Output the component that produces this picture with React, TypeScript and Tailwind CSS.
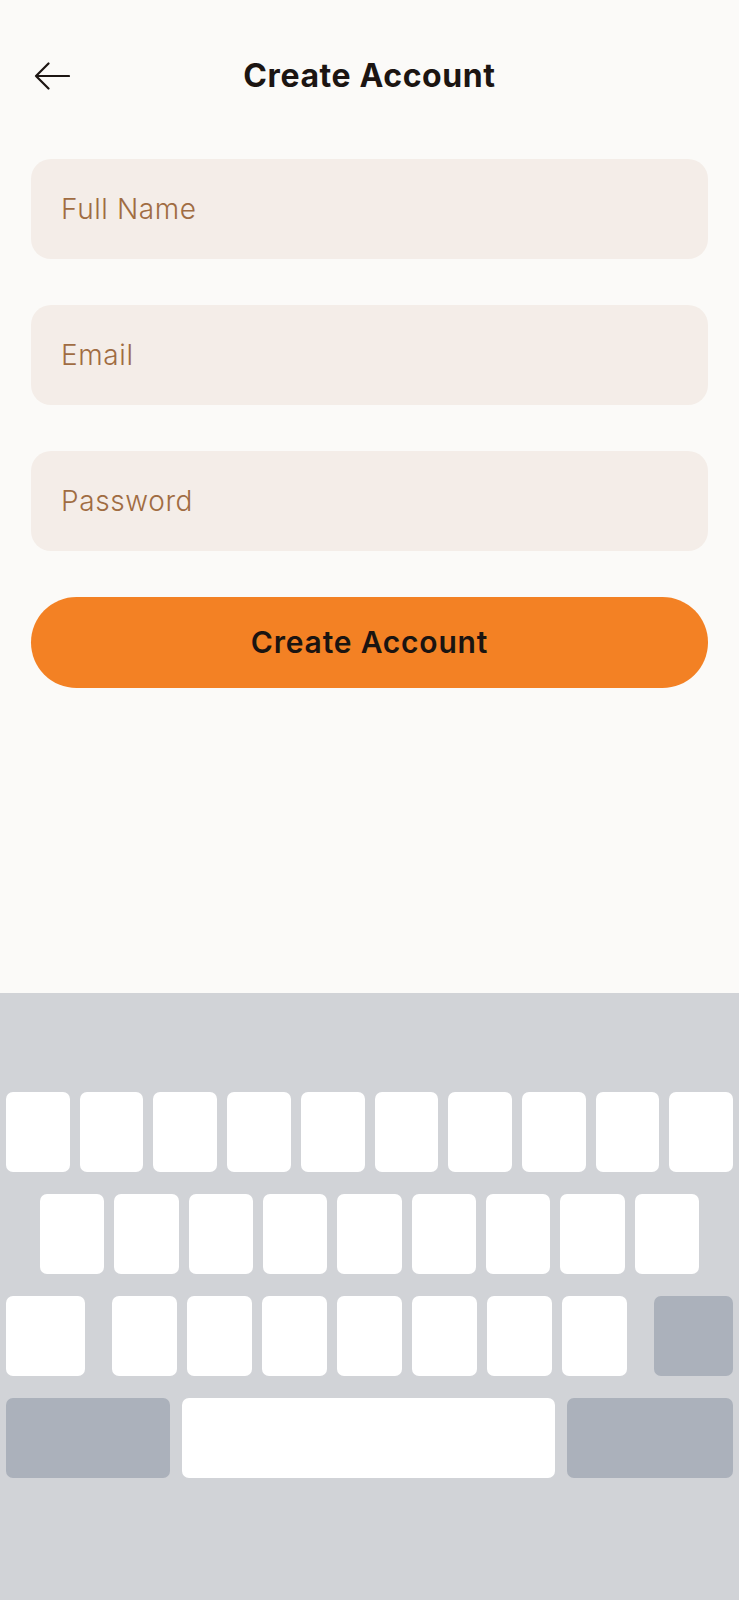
const row1 = Array.from({ length: 10 });
const row2 = Array.from({ length: 9 });
const row3 = Array.from({ length: 7 });

function Field({ placeholder, type = 'text' }: { placeholder: string; type?: string }) {
    return (
        <input
            type={type}
            placeholder={placeholder}
            className="h-[100px] w-full rounded-[20px] bg-[#f4ede8] px-[30px] text-[28px] font-light tracking-[0.6px] text-[#1c1512] outline-none placeholder:text-[#a06c42]"
        />
    );
}

function Key({ className = '' }: { className?: string }) {
    return <div className={`h-[80px] rounded-[7px] ${className}`} />;
}

export default function App() {
    return (
        <div
            className="flex min-h-[1600px] flex-col bg-[#fbfaf8]"
            style={{ fontFamily: 'Inter, "Noto Sans", sans-serif' }}
        >
            <div className="flex-1 px-[31px]">
                <header className="mt-[48px] flex h-[55px] items-center">
                    <button className="flex w-[40px] items-center pl-[3px] text-[#1c1512]">
                        <svg width="36" height="28" viewBox="0 0 36 28" fill="none">
                            <path
                                d="M14.5 1.5 L2 14 L14.5 26.5 M2 14 H35"
                                stroke="currentColor"
                                strokeWidth="2.2"
                                strokeLinecap="round"
                                strokeLinejoin="round"
                            />
                        </svg>
                    </button>
                    <h1 className="flex-1 text-center text-[32px] font-bold tracking-[0.6px] text-[#1c1512]">
                        Create Account
                    </h1>
                    <div className="w-[40px]" />
                </header>

                <form className="mt-[56px] flex flex-col gap-[46px]">
                    <Field placeholder="Full Name" />
                    <Field placeholder="Email" type="email" />
                    <Field placeholder="Password" type="password" />
                    <button
                        type="button"
                        className="h-[91px] w-full rounded-full bg-[#f38124] text-[30px] font-semibold tracking-[0.8px] text-[#1a1411]"
                    >
                        Create Account
                    </button>
                </form>
            </div>

            {/* keyboard */}
            <div className="flex h-[607px] flex-col gap-[22px] bg-[#d1d3d7] pt-[99px]">
                <div className="flex gap-[10px] px-[6px]">
                    {row1.map((_, i) => (
                        <Key key={i} className="flex-1 bg-white" />
                    ))}
                </div>
                <div className="flex gap-[10px] px-[40px]">
                    {row2.map((_, i) => (
                        <Key key={i} className="flex-1 bg-white" />
                    ))}
                </div>
                <div className="flex px-[6px]">
                    <Key className="w-[79px] bg-white" />
                    <div className="mx-[27px] flex flex-1 gap-[10px]">
                        {row3.map((_, i) => (
                            <Key key={i} className="flex-1 bg-white" />
                        ))}
                    </div>
                    <Key className="w-[79px] bg-[#abb1bb]" />
                </div>
                <div className="flex gap-[12px] px-[6px]">
                    <Key className="w-[164px] bg-[#abb1bb]" />
                    <Key className="flex-1 bg-white" />
                    <Key className="w-[166px] bg-[#abb1bb]" />
                </div>
            </div>
        </div>
    );
}
